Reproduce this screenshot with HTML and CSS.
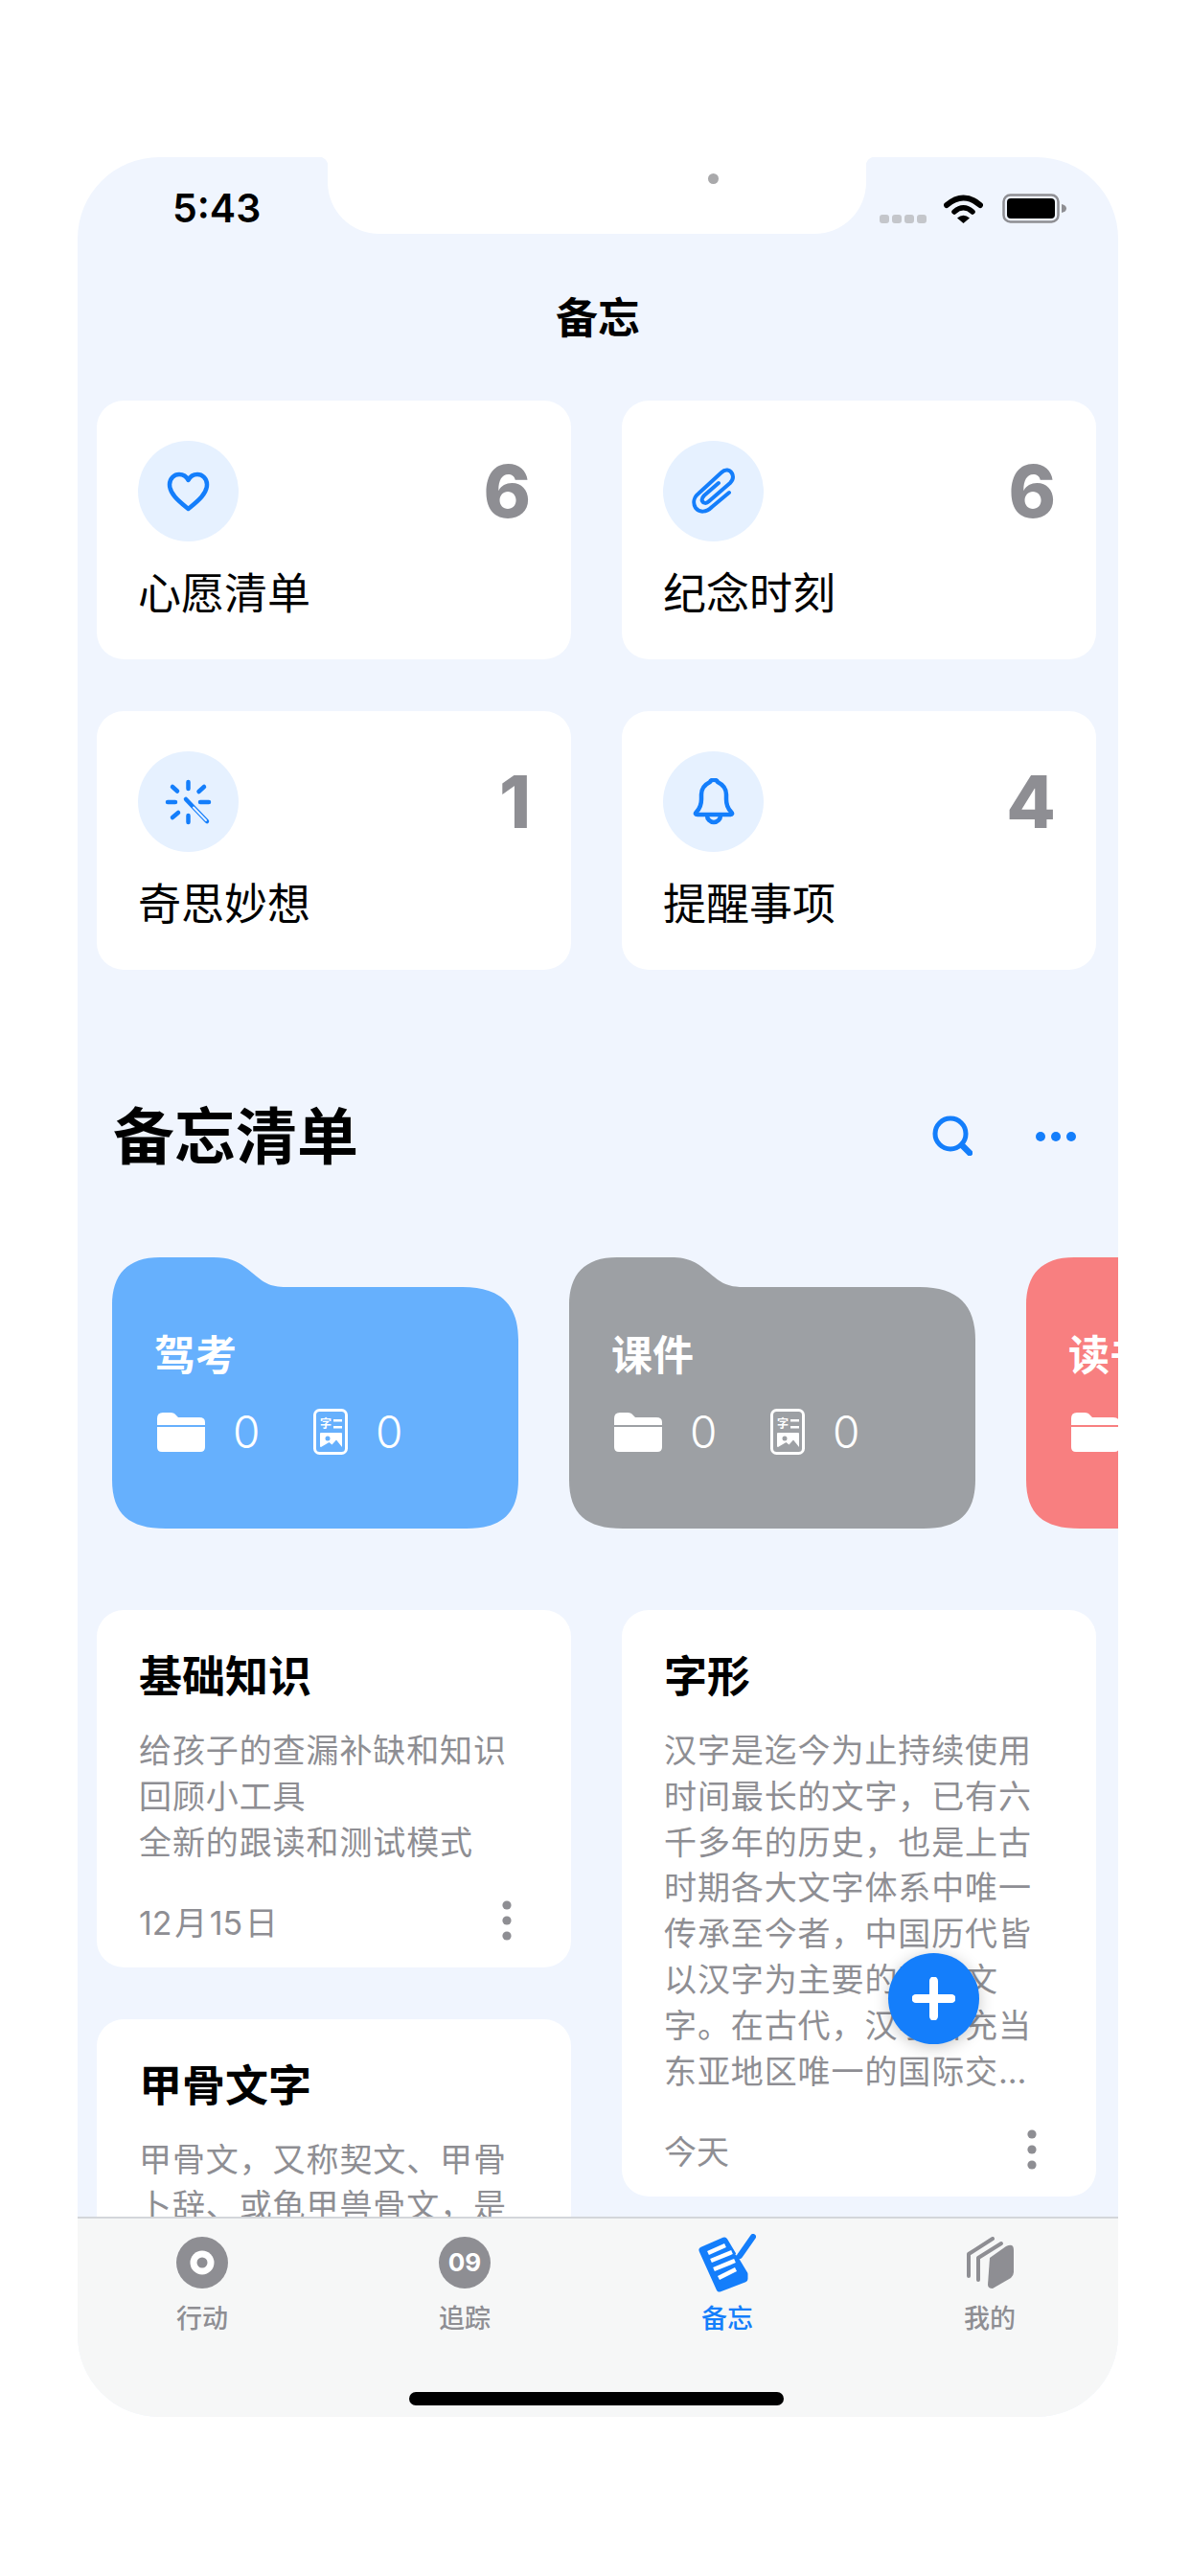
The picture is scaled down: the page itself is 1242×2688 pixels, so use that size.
FILE: index.html
```html
<!DOCTYPE html>
<html lang="zh-CN">
<head>
  <meta charset="UTF-8" />
  <title>备忘</title>
  <link rel="stylesheet" href="styles.css">
</head>
<body>
  <!-- shared icons -->
  <svg class="sprite">
    <symbol id="i-folder" viewBox="0 0 50 41">
      <path d="M0 6Q0 0 6 0H14Q18 0 20 3L22 5H44Q50 5 50 10V13H0Z" />
      <path d="M0 15H50V36Q50 41 45 41H5Q0 41 0 36Z" />
    </symbol>
    <symbol id="i-doc" viewBox="0 0 36 48">
      <rect x="1.5" y="1.5" width="33" height="45" rx="5" fill="none" stroke="#fff" stroke-width="3" />
      <text x="7" y="20" font-size="12" font-weight="700" fill="#fff">字</text>
      <path d="M21 11H30V13.5H21ZM21 18H30V20.5H21Z" />
      <path fill-rule="evenodd" d="M8 25H29Q30 25 30 26V40L24 32.5L19.5 37.5L16.5 35L8 40Q7 40 7 39V26Q7 25 8 25ZM15 28.5A2.5 2.5 0 1 0 15 33.5A2.5 2.5 0 1 0 15 28.5Z" />
    </symbol>
    <symbol id="i-more" viewBox="0 0 10 42">
      <circle cx="5" cy="5" r="4.6" />
      <circle cx="5" cy="21" r="4.6" />
      <circle cx="5" cy="37" r="4.6" />
    </symbol>
  </svg>

  <div class="screen">
    <div class="notch"><span class="camera"></span></div>

    <div class="status-bar">
      <span class="time">5:43</span>
      <div class="status-icons">
        <div class="signal"><i></i><i></i><i></i><i></i></div>
        <svg class="wifi" viewBox="0 0 41 31">
          <path d="M3 12Q20.5 -3 38 12" fill="none" stroke="#000" stroke-width="6" stroke-linecap="round" />
          <path d="M11 19Q20.5 10.5 30 19" fill="none" stroke="#000" stroke-width="5.5" stroke-linecap="round" />
          <path d="M14 25.5Q20.5 20 27 25.5L20.5 31Z" />
        </svg>
        <svg class="battery" viewBox="0 0 69 31">
          <rect x="1.5" y="1.5" width="57" height="28" rx="7" fill="none" stroke="#8e8e93" stroke-width="2.5" />
          <rect x="5" y="5" width="50" height="21" rx="4" />
          <path d="M62 11Q67 12 67 15.5Q67 19 62 20Z" fill="#8e8e93" />
        </svg>
      </div>
    </div>

    <h1 class="nav-title">备忘</h1>

    <div class="main">
      <div class="stats">
        <div class="stat-card">
          <div class="stat-top">
            <div class="stat-icon">
              <svg width="49" height="46" viewBox="-2 -2 49 46"><path class="line" d="M22.5 39C14 32 3 24 3 13.5C3 7 8 3 13 3C17 3 20.5 5 22.5 9C24.5 5 28 3 32 3C37 3 42 7 42 13.5C42 24 31 32 22.5 39Z" /></svg>
            </div>
            <span class="stat-count">6</span>
          </div>
          <div class="stat-label">心愿清单</div>
        </div>
        <div class="stat-card">
          <div class="stat-top">
            <div class="stat-icon">
              <svg width="48" height="53" viewBox="-2 -2 48 53"><path class="line thin" d="M38 26L20 41C14 47 7 47 3 42C0 37 1 31 6 27L30 5C34 1 39 2 41 6C43 10 42 13 39 16L17 35C14 38 11 37 10 35C9 33 10 31 12 29L27 16" /></svg>
            </div>
            <span class="stat-count">6</span>
          </div>
          <div class="stat-label">纪念时刻</div>
        </div>
        <div class="stat-card">
          <div class="stat-top">
            <div class="stat-icon">
              <svg width="50" height="50" viewBox="0 0 50 50">
                <path class="line" d="M24.5 4V11M24.5 39V46M3 25H11M37 25H46M8 9L13 13.500M41 9L35.500 14M8 41L14 36" />
                <path class="line" stroke-width="6.500" d="M22 22L44 45" />
                <path d="M30 30.500L43 44" fill="none" stroke="#e6f1ff" stroke-width="2" stroke-linecap="round" />
              </svg>
            </div>
            <span class="stat-count">1</span>
          </div>
          <div class="stat-label">奇思妙想</div>
        </div>
        <div class="stat-card">
          <div class="stat-top">
            <div class="stat-icon">
              <svg width="46" height="49" viewBox="-1 0 46 49"><path class="line" d="M4 35C8 31 9 27 9 22V17C9 10 14 6 18 4C19 1 25 1 26 4C30 6 35 10 35 17V22C35 27 36 31 40 35C42 37 41 38 39 38H5C3 38 2 37 4 35ZM15 39A7 7 0 0 0 29 39" /></svg>
            </div>
            <span class="stat-count">4</span>
          </div>
          <div class="stat-label">提醒事项</div>
        </div>
      </div>

      <div class="section-head">
        <h2>备忘清单</h2>
        <div class="section-tools">
          <svg width="42" height="42" viewBox="0 0 42 42">
            <circle cx="19" cy="19" r="16" fill="none" stroke="#147efb" stroke-width="5" />
            <path d="M31 31L39 39" stroke="#147efb" stroke-width="6.500" stroke-linecap="round" />
          </svg>
          <svg class="tools-dots" width="42" height="10" viewBox="0 0 42 10" fill="#147efb">
            <circle cx="5" cy="5" r="5" /><circle cx="21" cy="5" r="5" /><circle cx="37" cy="5" r="5" />
          </svg>
        </div>
      </div>

      <div class="folders">
        <div class="folder folder-blue">
          <div class="folder-title">驾考</div>
          <div class="folder-meta">
            <div class="meta-item"><svg class="meta-folder"><use href="#i-folder" /></svg><span>0</span></div>
            <div class="meta-item"><svg class="meta-doc"><use href="#i-doc" /></svg><span>0</span></div>
          </div>
        </div>
        <div class="folder folder-gray">
          <div class="folder-title">课件</div>
          <div class="folder-meta">
            <div class="meta-item"><svg class="meta-folder"><use href="#i-folder" /></svg><span>0</span></div>
            <div class="meta-item"><svg class="meta-doc"><use href="#i-doc" /></svg><span>0</span></div>
          </div>
        </div>
        <div class="folder folder-red">
          <div class="folder-title">读书</div>
          <div class="folder-meta">
            <div class="meta-item"><svg class="meta-folder"><use href="#i-folder" /></svg><span>0</span></div>
            <div class="meta-item"><svg class="meta-doc"><use href="#i-doc" /></svg><span>0</span></div>
          </div>
        </div>
      </div>

      <div class="notes">
        <div class="notes-col">
          <div class="note">
            <h3>基础知识</h3>
            <p>给孩子的查漏补缺和知识<br>回顾小工具<br>全新的跟读和测试模式</p>
            <div class="note-foot"><span class="note-date">12 月 15 日</span><svg class="more"><use href="#i-more" /></svg></div>
          </div>
          <div class="note">
            <h3>甲骨文字</h3>
            <p>甲骨文，又称契文、甲骨卜辞、或龟甲兽骨文，是中国已知最早的成体系文字。</p>
          </div>
        </div>
        <div class="notes-col">
          <div class="note">
            <h3>字形</h3>
            <p class="clamp">汉字是迄今为止持续使用时间最长的文字，已有六千多年的历史，也是上古时期各大文字体系中唯一传承至今者，中国历代皆以汉字为主要的官方文字。在古代，汉字曾充当东亚地区唯一的国际交流文字，二十世纪前仍是日本、朝鲜半岛、越南等国家的书面规范文字。</p>
            <div class="note-foot"><span class="note-date">今天</span><svg class="more"><use href="#i-more" /></svg></div>
          </div>
        </div>
      </div>
    </div>

    <div class="tab-bar">
      <div class="tabs">
        <div class="tab">
          <div class="tab-icon">
            <svg width="54" height="54" viewBox="0 0 54 54"><circle cx="27" cy="27" r="27" fill="#8e8e93" /><circle cx="27" cy="27" r="12.500" fill="#fff" /><circle cx="27" cy="27" r="5.500" fill="#8e8e93" /></svg>
          </div>
          <span>行动</span>
        </div>
        <div class="tab">
          <div class="tab-icon"><div class="day-badge">09</div></div>
          <span>追踪</span>
        </div>
        <div class="tab active">
          <div class="tab-icon">
            <svg width="60" height="61" viewBox="0 0 60 61">
              <path d="M4 17L27 7L48 42V47L22 57Z" fill="#147efb" stroke="#147efb" stroke-width="7" stroke-linejoin="round" />
              <path d="M10 20L28 12M13 28L35 19M16 37L38 28M21 46L39 37" stroke="#fff" stroke-width="4.500" />
              <path d="M57 3L42 24" stroke="#f6f7f7" stroke-width="9" />
              <path d="M57 3L43 23" stroke="#147efb" stroke-width="6" stroke-linecap="round" />
            </svg>
          </div>
          <span>备忘</span>
        </div>
        <div class="tab">
          <div class="tab-icon">
            <svg width="49" height="54" viewBox="0 0 49 54" fill="none" stroke="#8e8e93" stroke-width="4" stroke-linecap="round" stroke-linejoin="round">
              <path d="M27 2L2 18V41" />
              <path d="M36 7L12 22V45" />
              <path d="M24 22L41 10Q49 6 49 14V37Q49 40 46 43L27 54Q22 54 22 50Z" fill="#8e8e93" stroke="none" />
            </svg>
          </div>
          <span>我的</span>
        </div>
      </div>
      <div class="home-bar"></div>
    </div>

    <button class="fab">
      <svg width="45" height="45" viewBox="0 0 45 45"><path d="M22.500 4V41M4 22.500H41" stroke="#fff" stroke-width="9" stroke-linecap="round" /></svg>
    </button>
  </div>
</body>
</html>
```

FILE: styles.css
```css
* {
  box-sizing: border-box;
}
body {
  margin: 0;
  height: 2688px;
  padding: 164px 0 0 81px;
  background: #fff;
  color: #000;
  font-family: Inter, 'Noto Sans CJK SC', sans-serif;
}
h1, h2, h3, p {
  margin: 0;
}
.sprite {
  display: none;
}
.screen {
  position: relative;
  display: flex;
  flex-direction: column;
  width: 1086px;
  height: 2358px;
  border-radius: 85px;
  overflow: hidden;
  background: #f0f5fe;
}

/* status bar */
.notch {
  position: absolute;
  top: 0;
  left: 261px;
  width: 562px;
  height: 80px;
  background: #fff;
  border-radius: 0 0 54px 54px;
}
.notch::before,
.notch::after {
  content: '';
  position: absolute;
  top: 0;
  width: 9px;
  height: 9px;
}
.notch::before {
  left: -9px;
  background: radial-gradient(circle at 0 100%, transparent 9px, #fff 9.5px);
}
.notch::after {
  right: -9px;
  background: radial-gradient(circle at 100% 100%, transparent 9px, #fff 9.5px);
}
.camera {
  position: absolute;
  top: 17px;
  left: 397px;
  width: 11px;
  height: 11px;
  border-radius: 50%;
  background: #a9a9ab;
}
.status-bar {
  display: flex;
  justify-content: space-between;
  height: 138px;
  padding: 38px 52px 0 99px;
}
.time {
  font-size: 41px;
  font-weight: 600;
  line-height: 31px;
}
.status-icons {
  display: flex;
  align-items: flex-end;
  height: 31px;
}
.signal {
  display: flex;
  gap: 3px;
  margin-right: 18px;
}
.signal i {
  width: 10px;
  height: 9px;
  border-radius: 3px;
  background: #c4c6cb;
}
.wifi {
  width: 41px;
  height: 31px;
  margin-right: 20px;
}
.battery {
  width: 69px;
  height: 31px;
}
.nav-title {
  height: 60px;
  font-size: 44px;
  font-weight: 600;
  line-height: 60px;
  text-align: center;
}

.main {
  flex: 1;
  min-height: 0;
  overflow: hidden;
  padding-top: 56px;
}

/* top counters */
.stats {
  display: grid;
  grid-template-columns: 495px 495px;
  gap: 54px 53px;
  padding-left: 20px;
}
.stat-card {
  height: 270px;
  padding: 42px 42px 0 43px;
  border-radius: 28px;
  background: #fff;
}
.stat-top {
  display: flex;
  justify-content: space-between;
  align-items: center;
}
.stat-icon {
  display: flex;
  justify-content: center;
  align-items: center;
  width: 105px;
  height: 105px;
  border-radius: 50%;
  background: #e6f1ff;
}
.line {
  fill: none;
  stroke: #147efb;
  stroke-width: 4.5;
  stroke-linecap: round;
  stroke-linejoin: round;
}
.line.thin {
  stroke-width: 4;
}
.stat-count {
  font-size: 75px;
  font-weight: 800;
  color: #8e8e93;
}
.stat-label {
  margin-top: 32px;
  font-size: 45px;
  line-height: 45px;
}

/* section heading */
.section-head {
  display: flex;
  justify-content: space-between;
  align-items: center;
  height: 80px;
  margin-top: 133px;
  padding: 0 44px 0 37px;
}
.section-head h2 {
  margin-top: -8px;
  font-size: 64px;
  font-weight: 700;
}
.section-tools {
  display: flex;
  align-items: center;
  gap: 66px;
}
.tools-dots {
  margin-top: 2px;
}

/* folders */
.folders {
  display: flex;
  gap: 53px;
  margin-top: 87px;
  padding-left: 36px;
  overflow: hidden;
}
.folder {
  flex: none;
  width: 424px;
  height: 283px;
  padding: 81px 0 0 44px;
  color: #fff;
  clip-path: path('M0 50C0 18 16 0 50 0L106 0C126 0 134 6 146 16C158 26 164 31 182 31L366 31C406 31 424 50 424 86L424 232C424 268 406 283 370 283L56 283C18 283 0 268 0 232Z');
}
.folder-blue {
  background: #66b0fd;
}
.folder-gray {
  background: #9da0a4;
}
.folder-red {
  background: #f87f80;
}
.folder-title {
  font-size: 43px;
  font-weight: 600;
  line-height: 43px;
}
.folder-meta {
  display: flex;
  margin-top: 34px;
  padding-left: 3px;
}
.meta-item {
  display: flex;
  align-items: center;
  gap: 29px;
  width: 163px;
  height: 48px;
  font-size: 46px;
  font-weight: 300;
}
.meta-item svg {
  fill: #fff;
}
.meta-folder {
  width: 50px;
  height: 41px;
}
.meta-doc {
  width: 36px;
  height: 48px;
}

/* note cards */
.notes {
  display: flex;
  gap: 53px;
  margin-top: 85px;
  padding-left: 20px;
}
.notes-col {
  display: flex;
  flex-direction: column;
  gap: 54px;
  width: 495px;
}
.note {
  padding: 47px 66px 25px 44px;
  border-radius: 28px;
  background: #fff;
}
.note h3 {
  font-size: 45px;
  font-weight: 700;
  line-height: 45px;
}
.note p {
  margin-top: 31px;
  font-size: 34px;
  line-height: 47.8px;
  letter-spacing: 0.9px;
  color: #8e8e93;
}
.clamp {
  display: -webkit-box;
  -webkit-box-orient: vertical;
  -webkit-line-clamp: 8;
  overflow: hidden;
}
.note-foot {
  display: flex;
  justify-content: space-between;
  align-items: center;
  width: 389px;
  height: 48px;
  margin-top: 34px;
  font-size: 34px;
  color: #8e8e93;
}
.note-date {
  word-spacing: -7px;
}
.more {
  width: 10px;
  height: 42px;
  fill: #8e8e93;
}

/* tab bar */
.tab-bar {
  display: flex;
  flex-direction: column;
  height: 209px;
  border-top: 2px solid #d3d6da;
  background: #f6f7f7;
}
.tabs {
  display: flex;
  margin-left: -7px;
  padding-top: 16px;
}
.tab {
  flex: none;
  display: flex;
  flex-direction: column;
  align-items: center;
  width: 274px;
  font-size: 27px;
  font-weight: 500;
  line-height: 32px;
  color: #8e8e93;
}
.tab.active {
  color: #147efb;
}
.tab-icon {
  display: flex;
  justify-content: center;
  align-items: center;
  height: 60px;
  margin-bottom: 13px;
}
.day-badge {
  width: 54px;
  height: 54px;
  border-radius: 50%;
  background: #8e8e93;
  color: #fff;
  font-size: 26px;
  font-weight: 700;
  line-height: 54px;
  text-align: center;
}
.home-bar {
  width: 391px;
  height: 14px;
  margin: auto 0 12px 346px;
  border-radius: 7px;
  background: #000;
}

/* floating add button */
.fab {
  position: absolute;
  right: 145px;
  bottom: 389px;
  display: flex;
  justify-content: center;
  align-items: center;
  width: 95px;
  height: 95px;
  padding: 0;
  border: none;
  border-radius: 50%;
  background: #147efb;
  box-shadow: 0 3px 16px rgba(0, 0, 0, 0.22);
}
```
